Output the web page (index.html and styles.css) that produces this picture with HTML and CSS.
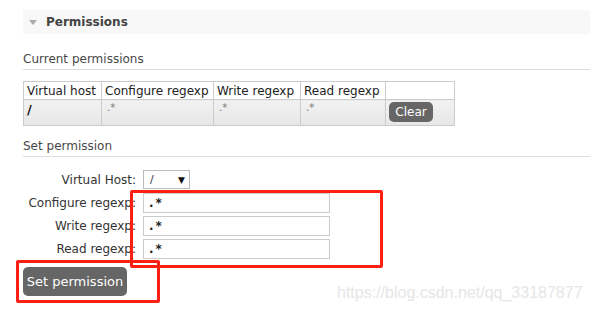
FILE: index.html
```html
<!DOCTYPE html>
<html lang="en">
<head>
	<meta charset="utf-8">
	<title>Permissions</title>
	<link rel="stylesheet" href="styles.css">
</head>
<body>
	<div class="section">
		<h2 class="section-head"><span class="arrow"></span>Permissions</h2>
		<div class="section-body">
			<h3 class="sub-first">Current permissions</h3>
			<table class="perms">
				<tr>
					<th class="c-vhost">Virtual host</th>
					<th class="c-conf">Configure regexp</th>
					<th class="c-write">Write regexp</th>
					<th class="c-read">Read regexp</th>
					<th class="c-act"></th>
				</tr>
				<tr>
					<td class="vhost">/</td>
					<td class="re">.*</td>
					<td class="re">.*</td>
					<td class="re">.*</td>
					<td><button type="button" class="btn btn-small">Clear</button></td>
				</tr>
			</table>

			<h3>Set permission</h3>
			<form class="perm-form">
				<label for="vhost">Virtual Host:</label>
				<div class="select"><span>/</span><span class="caret">&#9660;</span></div>
				<label for="configure">Configure regexp:</label>
				<input id="configure" type="text" value=".*">
				<label for="write">Write regexp:</label>
				<input id="write" type="text" value=".*">
				<label for="read">Read regexp:</label>
				<input id="read" type="text" value=".*">
			</form>
			<button type="button" class="btn btn-submit">Set permission</button>
		</div>
	</div>

	<span class="mark mark-inputs"></span>
	<span class="mark mark-button"></span>
	<span class="watermark">https://blog.csdn.net/qq_33187877</span>
</body>
</html>
```

FILE: styles.css
```css
body {
	margin: 0;
	font-family: "DejaVu Sans", Verdana, sans-serif;
	font-size: 12px;
	color: #484848;
	background: #fff;
	position: relative;
	height: 312px;
	overflow: hidden;
}
.section {
	margin: 10px 0 0 23px;
}
.section-head {
	display: flex;
	align-items: center;
	height: 24px;
	margin: 0;
	padding-left: 6px;
	background: #f8f8f8;
	font-size: 12px;
	font-weight: bold;
	color: #444;
}
.arrow {
	width: 0;
	height: 0;
	border-left: 4px solid transparent;
	border-right: 4px solid transparent;
	border-top: 5px solid #aaa;
	margin: 1px 9px 0 0;
}
h3 {
	margin: 0;
	height: 17px;
	line-height: 14px;
	font-size: 12px;
	font-weight: normal;
	color: #484848;
	border-bottom: 1px solid #ddd;
}
.sub-first {
	margin-top: 18px;
}
.perms {
	table-layout: fixed;
	border-collapse: collapse;
	margin: 11px 0 13px;
	border: 1px solid #ccc;
}
.perms th {
	font-weight: normal;
	text-align: left;
	color: #222;
	height: 17px;
	padding: 0 3px;
	border: 1px solid #ccc;
	white-space: nowrap;
	overflow: hidden;
}
.perms .c-vhost { width: 71px; }
.perms .c-conf { width: 105px; }
.perms .c-write { width: 80px; }
.perms .c-read { width: 78px; }
.perms .c-act { width: 62px; }
.perms td {
	height: 23px;
	padding: 2px 3px 0;
	border: 1px solid #ccc;
	background: linear-gradient(#f2f2f2, #e6e6e6);
	vertical-align: top;
}
.perms td.vhost {
	font-weight: bold;
	font-size: 13px;
	color: #111;
	line-height: 16px;
}
.perms td.re {
	font-size: 10px;
	line-height: 12px;
	color: #777;
	padding-left: 5px;
}
.btn {
	font-family: inherit;
	border: 0;
	border-radius: 5px;
	background: #666;
	color: #fff;
	cursor: pointer;
}
.btn-small {
	display: block;
	font-size: 12px;
	height: 20px;
	width: 44px;
	padding: 0;
}
.perm-form {
	display: grid;
	grid-template-columns: 113px 187px;
	grid-auto-rows: 19px;
	column-gap: 7px;
	row-gap: 4px;
	align-items: center;
	margin-top: 13px;
}
.perm-form label {
	text-align: right;
	color: #333;
	white-space: nowrap;
}
.select {
	display: flex;
	justify-content: space-between;
	align-items: center;
	width: 47px;
	height: 19px;
	box-sizing: border-box;
	border: 1px solid #bbb;
	padding: 0 4px 0 6px;
	font-size: 11px;
	color: #333;
}
.select .caret {
	font-size: 9px;
	color: #111;
}
.perm-form input {
	box-sizing: border-box;
	width: 187px;
	height: 20px;
	border: 1px solid #ccc;
	padding: 0 5px;
	font-family: inherit;
	font-size: 12px;
	font-weight: bold;
	letter-spacing: 2px;
	color: #222;
}
.btn-submit {
	display: block;
	margin-top: 9px;
	width: 104px;
	height: 29px;
	font-size: 13px;
	padding: 0;
}
.mark {
	position: absolute;
	border: 3px solid #ff1f12;
	border-radius: 2px;
}
.mark-inputs {
	left: 130px;
	top: 190px;
	width: 247px;
	height: 72px;
}
.mark-button {
	left: 16px;
	top: 260px;
	width: 138px;
	height: 37px;
}
.watermark {
	position: absolute;
	left: 337px;
	top: 284px;
	font-family: "Liberation Sans", Arial, sans-serif;
	font-size: 16px;
	color: #e6e6e6;
}
```
